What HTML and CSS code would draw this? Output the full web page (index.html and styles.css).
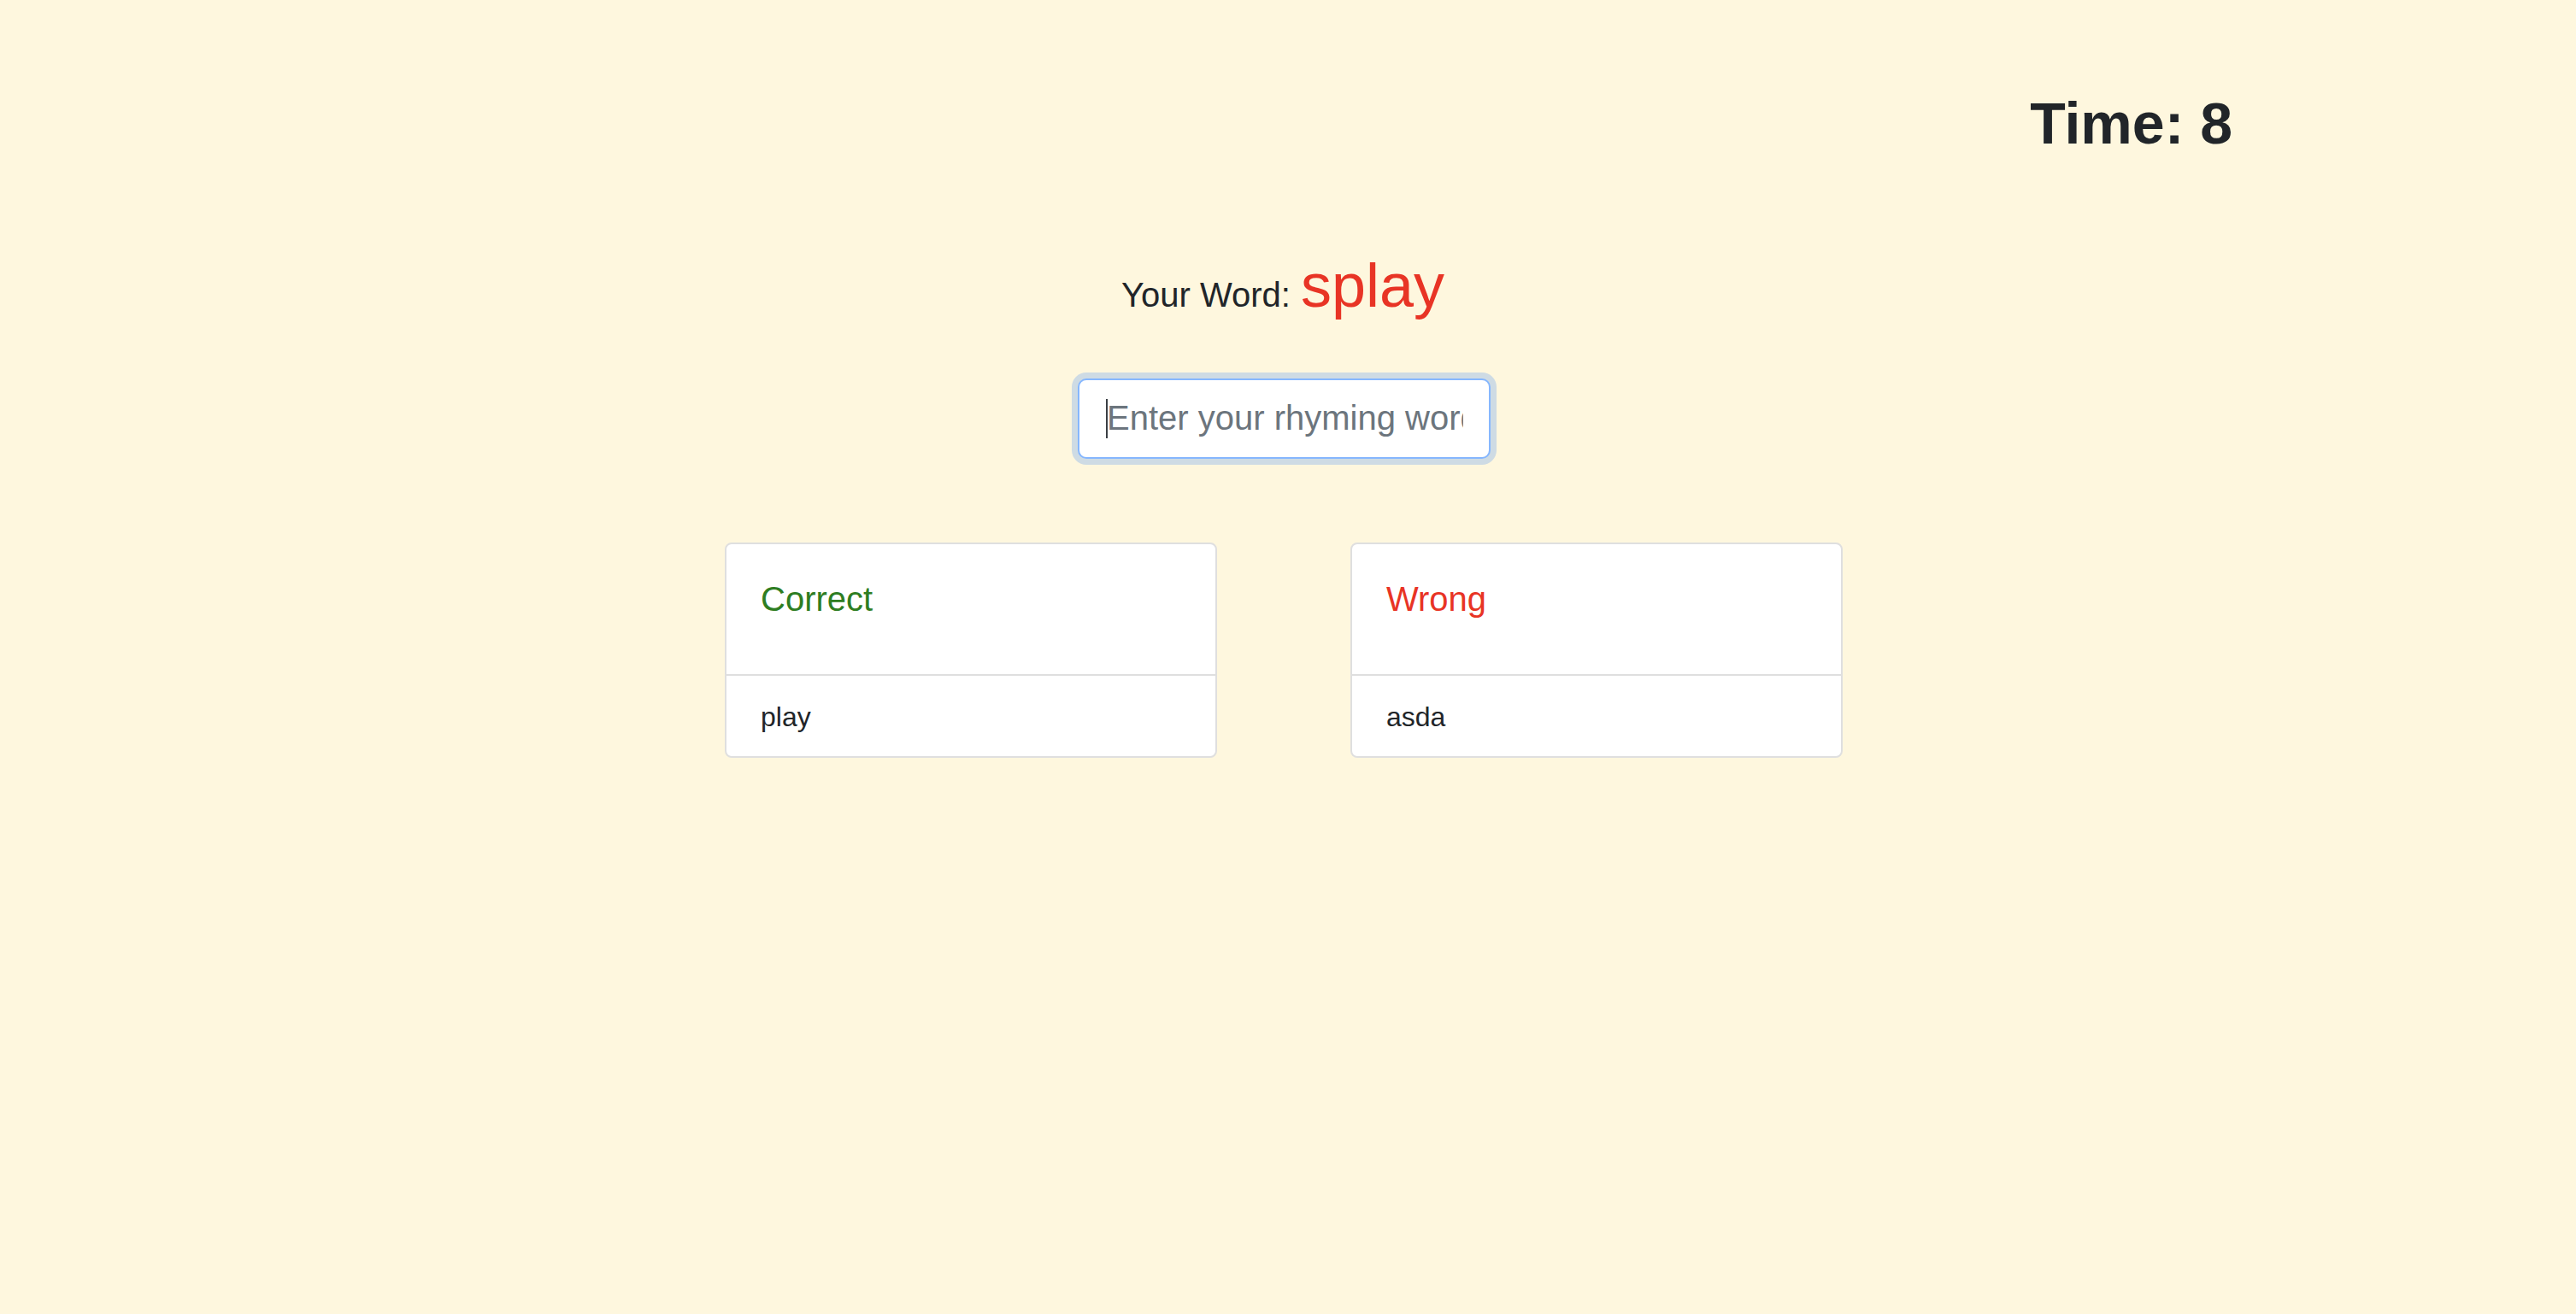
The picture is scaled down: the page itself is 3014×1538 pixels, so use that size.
FILE: index.html
```html
<!DOCTYPE html>
<html lang="en">
<head>
<meta charset="utf-8">
<title>Rhyme Game</title>
<link rel="stylesheet" href="styles.css">
</head>
<body>
  <div class="timer">Time: 8</div>
  <div class="word-row">
    <span class="word-label">Your Word:</span>
    <span class="word">splay</span>
  </div>
  <div class="input-row">
    <div class="input-wrap">
      <input class="rhyme-input" type="text" placeholder="Enter your rhyming word">
      <span class="caret"></span>
    </div>
  </div>
  <div class="cards">
    <div class="card">
      <div class="card-header"><span class="title correct">Correct</span></div>
      <div class="card-item">play</div>
    </div>
    <div class="card">
      <div class="card-header"><span class="title wrong">Wrong</span></div>
      <div class="card-item">asda</div>
    </div>
  </div>
</body>
</html>
```

FILE: styles.css
```css
html, body {
  margin: 0;
  padding: 0;
}
body {
  background: #fef7de;
  font-family: "Liberation Sans", Arial, Helvetica, sans-serif;
  color: #212529;
  width: 3014px;
  height: 1538px;
  overflow: hidden;
}
.timer {
  padding-top: 104px;
  padding-right: 402px;
  text-align: right;
  font-weight: 700;
  font-size: 68px;
  line-height: 1.2;
  color: #212529;
}
.word-row {
  margin-top: 105px;
  padding-right: 12px;
  display: flex;
  justify-content: center;
  align-items: baseline;
  gap: 12px;
}
.word-label {
  font-size: 40px;
  line-height: 1.2;
}
.word {
  font-size: 72px;
  line-height: 1.2;
  color: #e83425;
}
.input-row {
  margin-top: 66px;
  display: flex;
  justify-content: center;
  padding-right: 9px;
}
.input-wrap {
  position: relative;
  display: flex;
}
.rhyme-input {
  box-sizing: border-box;
  width: 483px;
  height: 94px;
  padding: 0 30px 0 32px;
  border: 2px solid #86b7fe;
  border-radius: 10px;
  box-shadow: 0 0 0 7px rgba(13, 110, 253, 0.2);
  font-family: "Liberation Sans", Arial, Helvetica, sans-serif;
  font-size: 40px;
  color: #212529;
  background: #fff;
  outline: none;
}
.rhyme-input::placeholder {
  color: #6c757d;
}
.caret {
  position: absolute;
  left: 33px;
  top: 24px;
  width: 2px;
  height: 46px;
  background: #3a3f44;
}
.cards {
  margin-top: 98px;
  padding-left: 848px;
  display: flex;
  gap: 156px;
}
.card {
  box-sizing: border-box;
  width: 576px;
  background: #fff;
  border: 2px solid #dfdfdf;
  border-radius: 8px;
}
.card-header {
  padding: 40px 40px 64px;
}
.title {
  display: block;
  font-size: 40px;
  line-height: 1.2;
}
.correct { color: #2e7d22; }
.wrong { color: #e83425; }
.card-item {
  border-top: 2px solid #dfdfdf;
  padding: 24px 40px 22px;
  font-size: 32px;
  line-height: 1.5;
  color: #212529;
}
```
